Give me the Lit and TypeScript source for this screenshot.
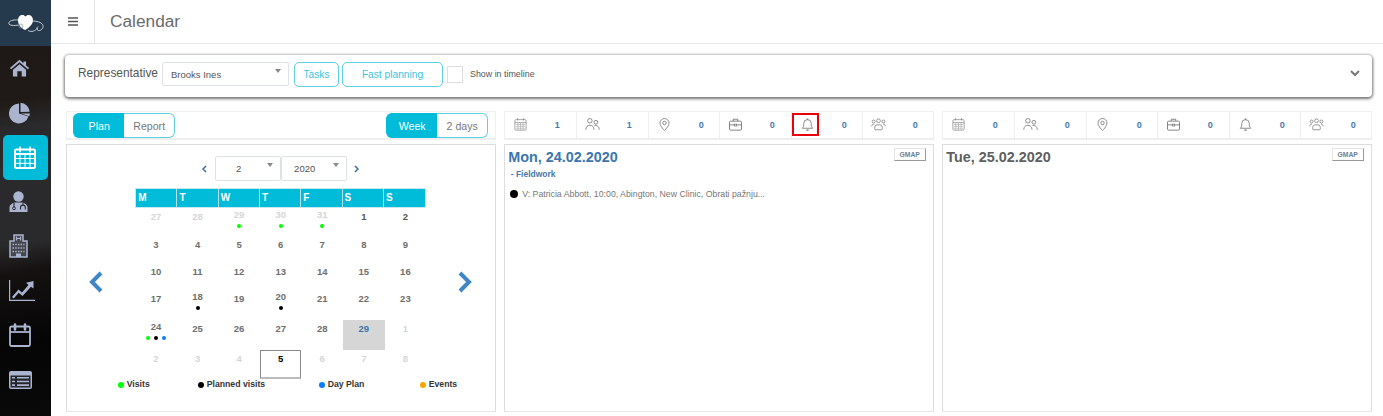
import { LitElement, html, css, svg } from "lit";
import { customElement } from "lit/decorators.js";

const ICON = "#aab4cf";
const DARK = "#2b2c33";
const navIcons = [
  { box: "0 1 24 22", t: svg`<path fill="${ICON}" d="M12 2 1 12l1.500 1.600L12 5l9.500 8.600L23 12l-3.500-3.200V4h-3v2.100z"/><path fill="${ICON}" d="M4.500 14.200 12 7.400l7.500 6.800V22.500h-5V16h-5v6.500h-5z"/>` },
  { box: "0 0 22 22", t: svg`<path fill="${ICON}" d="M10 1.500a10 10 0 1 0 9.500 13L10 11.500z"/><path fill="${ICON}" d="M11.500 .8V10l9.200-.2A10 10 0 0 0 11.500 .8zM11.800 11.500l9.100.1a10 10 0 0 1-.6 2.600z"/>` },
  { box: "0 0 22 23", t: svg`<rect x="1" y="3.500" width="20" height="18.500" rx="1.500" fill="none" stroke="#fff" stroke-width="2"/><path stroke="#fff" stroke-width="2" stroke-linecap="round" d="M6 1.500v4M16 1.500v4"/><path stroke="#fff" stroke-width="2" d="M1 8h20"/><path stroke="#fff" stroke-width="1" d="M1 12.500h20M1 17.300h20M6 8v14M11 8v14M16 8v14"/>` },
  { box: "0 0 19 21", t: svg`<circle cx="9.500" cy="5.500" r="5.200" fill="${ICON}"/><path fill="${ICON}" d="M.5 21v-4.500c0-2.500 2.500-4.500 5-5h8c2.500.5 5 2.500 5 5V21z"/><path fill="none" stroke="${DARK}" stroke-width="1.100" d="M5 11.500V16M14 11.500V14"/><circle cx="5" cy="17.300" r="1.400" fill="none" stroke="${DARK}" stroke-width="1"/><path fill="none" stroke="${DARK}" stroke-width="1.100" d="M11.500 18.500v-2a2.400 2.400 0 0 1 4.800 0v2"/>` },
  { box: "0 0 19 24", t: svg`<path fill="#45464e" stroke="${ICON}" stroke-width="1.500" d="M5 1h9v6h4v16H1V7h4z"/><path stroke="${ICON}" stroke-width="1.200" d="M7.500 2.500v4M11.500 2.500v4M7.500 4.500h4"/><path stroke="${ICON}" stroke-width="1.500" stroke-dasharray="1.500 1.200" d="M3.500 10.500h12M3.500 14h12M3.500 17.500h12"/><path fill="${ICON}" d="M7 19.500h5V23H7z"/>` },
  { box: "0 0 26 21", t: svg`<path fill="none" stroke="${ICON}" stroke-width="1.200" d="M.6 0v20.300H26"/><path fill="${ICON}" d="m3 17 6.500-7.500 3.500 3L19.500 5l-2.500-2.300L24.500 1v7.500L22 6.800 13.500 16 9.700 12.700 4.700 18.500z"/>` },
  { box: "0 0 22 24", t: svg`<rect x="1" y="3.500" width="20" height="19.500" rx="1.500" fill="none" stroke="${ICON}" stroke-width="1.800"/><path stroke="${ICON}" stroke-width="2.600" stroke-linecap="round" d="M6 1.500v5M16 1.500v5"/><path stroke="${ICON}" stroke-width="1.800" d="M1 9h20"/>` },
  { box: "0 0 23 18", t: svg`<rect width="23" height="18" rx="2" fill="${ICON}"/><rect x="1.500" y="4.500" width="20" height="12" fill="#24252c"/><path fill="${ICON}" d="M3 6h3v1.600H3zm5 0h12v1.600H8zM3 9.700h3v1.600H3zm5 0h12v1.600H8zM3 13.300h3v1.600H3zm5 0h12v1.600H8z"/>` },
];
const statIcons = [
  svg`<rect x="2.500" y="3.500" width="15" height="14" rx="1.500" fill="none" stroke="#8a8a8a"/><path stroke="#8a8a8a" d="M2.500 7.500h15M6 1.500v3M14 1.500v3"/><path stroke="#a8a8a8" stroke-width=".8" d="M4 10h12M4 12.500h12M4 15h12M6.500 8v9M10 8v9M13.500 8v9"/>`,
  svg`<circle cx="6.500" cy="5" r="3" fill="none" stroke="#777" stroke-width="1.100"/><circle cx="14.500" cy="7" r="2.500" fill="none" stroke="#777" stroke-width="1.100"/><path fill="none" stroke="#777" stroke-width="1.100" d="M1 17c0-4 2.500-6 5.500-6s5.500 2 5.500 6M12.500 11.500c3-1 6.500.800 6.500 5.500"/>`,
  svg`<path fill="none" stroke="#777" stroke-width="1.100" d="M10 18s-6-5.500-6-10a6 6 0 0 1 12 0c0 4.500-6 10-6 10z"/><circle cx="10" cy="8" r="2.300" fill="none" stroke="#777" stroke-width="1.100"/>`,
  svg`<rect x="2" y="5.500" width="16" height="12" rx="1.500" fill="none" stroke="#777" stroke-width="1.200"/><path fill="none" stroke="#777" stroke-width="1.200" d="M7 5.500V3h6v2.500M2 10.500h16"/><rect x="8.500" y="9.500" width="3" height="2.500" fill="#fff" stroke="#777"/>`,
  svg`<path fill="none" stroke="#777" stroke-width="1.100" d="M3 15h14c-1.500-1.500-2-3-2-6.500a5 5 0 0 0-10 0C5 12 4.500 13.500 3 15z"/><path stroke="#777" stroke-width="1.800" d="M8.500 17.500h3M10 2v1.500"/>`,
  svg`<circle cx="10" cy="5" r="2.500" fill="none" stroke="#777"/><circle cx="3.500" cy="6" r="2" fill="none" stroke="#777"/><circle cx="16.500" cy="6" r="2" fill="none" stroke="#777"/><path fill="none" stroke="#777" d="M5 16v-2.500A3 3 0 0 1 8 10.500h4a3 3 0 0 1 3 3V16a1 1 0 0 1-1 1H6a1 1 0 0 1-1-1zM1 12.500c0-2 1.200-3 3-3M19 12.500c0-2-1.200-3-3-3"/>`,
];

type Cell = { n: number; cls?: string; dots?: string[] };
const G = "#00ff00", K = "#000", B = "#0a7cff", O = "#ffa500";
const rows: Cell[][] = [
  [{ n: 27, cls: "off" }, { n: 28, cls: "off" }, { n: 29, cls: "off", dots: [G] }, { n: 30, cls: "off", dots: [G] }, { n: 31, cls: "off", dots: [G] }, { n: 1, cls: "dk" }, { n: 2, cls: "dk" }],
  [3, 4, 5, 6, 7, 8, 9].map((n) => ({ n })),
  [10, 11, 12, 13, 14, 15, 16].map((n) => ({ n })),
  [{ n: 17 }, { n: 18, dots: [K] }, { n: 19 }, { n: 20, dots: [K] }, { n: 21 }, { n: 22 }, { n: 23 }],
  [{ n: 24, dots: [G, K, B] }, { n: 25 }, { n: 26 }, { n: 27 }, { n: 28 }, { n: 29, cls: "today" }, { n: 1, cls: "off" }],
  [{ n: 2, cls: "off" }, { n: 3, cls: "off" }, { n: 4, cls: "off" }, { n: 5, cls: "sel" }, { n: 6, cls: "off" }, { n: 7, cls: "off" }, { n: 8, cls: "off" }],
];

@customElement("app-root")
export class AppRoot extends LitElement {
  static styles = css`
    :host { display: block; width: 1383px; height: 416px; overflow: hidden; background: #fff; font-family: "Liberation Sans", Arial, sans-serif; color: #666; }
    * { box-sizing: border-box; }
    .app { display: flex; height: 416px; }
    .side { width: 51px; flex: none; display: flex; flex-direction: column; background: linear-gradient(172deg, #1d1815 0, #1f1a17 24%, #2a2a2c 31%, #2a2a2c 58%, #151111 65%, #050505 82%, #090909 100%); }
    .logo { height: 46px; background: #263a4d; display: flex; align-items: center; justify-content: center; }
    .nav { display: flex; flex-direction: column; }
    .nav a { height: 44.500px; padding-left: 9px; display: flex; align-items: center; }
    .nav a.active { background: #00bcd8; margin: 0 3px; height: 45px; padding-left: 11px; border-radius: 5px; margin-bottom: -.5px; }
    .nav svg { display: block; flex: none; }
    .i0 { width: 21px; height: 18px; }
    .i1 { width: 22px; height: 22px; }
    .i2 { width: 22px; height: 23px; }
    .i3 { width: 19px; height: 21px; }
    .i4 { width: 19px; height: 24px; }
    .i5 { width: 26px; height: 21px; }
    .i6 { width: 22px; height: 24px; }
    .i7 { width: 23px; height: 18px; }
    .main { flex: 1; min-width: 0; display: flex; flex-direction: column; }
    .top { height: 44px; flex: none; display: flex; align-items: center; border-bottom: 1px solid #e6e6e6; }
    .burger { width: 44px; height: 43px; border-right: 1px solid #e6e6e6; display: flex; align-items: center; justify-content: center; }
    .burger svg { width: 10px; height: 9px; }
    .title { margin-left: 15px; font-size: 17.300px; color: #6b6b6b; }
    .filter { margin: 11px 11px 0 14px; height: 42px; padding: 0 12px 4px 13px; display: flex; align-items: center; background: #fff; border-radius: 4px; box-shadow: 0 1px 3px 1px rgba(0,0,0,.55); }
    .filter .lab { font-size: 11.900px; color: #555; margin-right: 4px; margin-top: -2px; }
    .sel { position: relative; background: #fff; border: 1px solid #dde2e8; border-radius: 2px; display: flex; align-items: center; color: #555; }
    .sel::after { content: ""; position: absolute; right: 7px; top: 6px; border-left: 3px solid transparent; border-right: 3px solid transparent; border-top: 4px solid #888; }
    .rep { width: 127px; height: 24px; padding-left: 8px; font-size: 9.500px; }
    .btn { height: 25px; border: 1px solid #5fd0e2; border-radius: 5px; color: #3cc4dc; font-size: 10.200px; display: flex; align-items: center; justify-content: center; }
    .tasks { width: 45px; margin-left: 5px; }
    .fast { width: 101px; margin-left: 3px; }
    .check { width: 16px; height: 17px; border: 1px solid #ddd; margin-left: 4px; }
    .show { font-size: 8.900px; margin-left: 7px; color: #555; }
    .chev { margin-left: auto; width: 10px; height: 7px; margin-top: -1px; }
    .cols { margin: 14px 11px 0 14.700px; display: grid; grid-template-columns: 430px 430px 430px; column-gap: 8px; }
    .col { display: flex; flex-direction: column; gap: 4px; }
    .bar { height: 29px; border: 1px solid #f0f0f0; border-bottom: 2px solid #eee; display: flex; align-items: center; justify-content: space-between; padding: 1px 6.500px 0; }
    .seg { display: flex; font-size: 10.600px; }
    .seg span { height: 25px; display: flex; align-items: center; justify-content: center; border: 1px solid #5fd0e2; color: #777; width: 51px; }
    .seg span:first-child { border-radius: 6px 0 0 6px; border-right: 0; }
    .seg span:last-child { border-radius: 0 6px 6px 0; border-left: 0; }
    .seg span.on { background: #00bcd8; color: #fff; border-color: #00bcd8; }
    .stats { height: 29px; border: 1px solid #f0f0f0; border-bottom: 2px solid #eee; display: grid; grid-template-columns: 72px 72px 71px 72px 71px 71px; }
    .stat { position: relative; display: flex; align-items: center; padding-left: 8px; border-right: 1px solid #eee; }
    .stat:last-child { border-right: 0; }
    .stat svg { width: 15px; height: 15px; flex: none; margin-top: -1px; }
    .stat b { font-size: 9px; color: #4a78a8; position: absolute; left: 50px; }
    .stat.mark .box { position: absolute; left: 0; top: 1px; width: 27px; height: 23px; border: 2px solid #e8000b; }
    .panel { height: 268px; border: 1px solid #ddd; border-bottom-color: #e6e6e6; position: relative; }
    .day { padding: 4px 3.500px 0; }
    .day h2 { margin: 0; font-size: 14.400px; line-height: 17px; font-weight: 700; color: #606060; }
    .day.cur h2 { color: #3a76ad; }
    .gmap { position: absolute; right: 7px; top: 3px; width: 32px; height: 13px; font-size: 6.800px; font-weight: 700; color: #6f8090; display: flex; align-items: center; justify-content: center; border: 1px solid #e6e6e6; border-right: 1px solid #999; border-bottom: 1px solid #999; }
    .work { font-size: 8.500px; font-weight: 700; color: #4a78a8; margin: 2px 0 0 2.500px; line-height: 12px; }
    .visit { display: flex; align-items: center; gap: 4px; margin: 8px 0 0 2px; font-size: 8.750px; color: #777; line-height: 12px; }
    .visit i { width: 8px; height: 8px; background: #000; border-radius: 50%; }
    .cal { padding-top: 11px; display: flex; flex-direction: column; align-items: center; }
    .pick { display: flex; align-items: center; height: 25px; }
    .pick .sel { width: 66px; height: 25px; justify-content: center; font-size: 9.500px; padding-right: 19px; }
    .pick svg { width: 6px; height: 8px; }
    .pick svg.l { margin-right: 8px; }
    .pick svg.r { margin-left: 7px; }
    .body { position: relative; width: 100%; display: flex; justify-content: center; margin-top: 7px; }
    .arrow { position: absolute; top: 82px; width: 16px; height: 24px; }
    .arrow.l { left: 21px; }
    .arrow.r { right: 22px; }
    .grid { width: 291px; }
    .head { display: grid; grid-template-columns: repeat(7, 1fr); height: 20px; background: #00bcd8; border: 1px solid #c5e9ef; }
    .head span { color: #fff; font-weight: 700; font-size: 10px; line-height: 18px; padding-left: 2px; border-right: 1px solid #b9dfe6; }
    .head span:last-child { border-right: 0; }
    .days { display: grid; grid-template-columns: repeat(7, 1fr); grid-template-rows: 28px 27px 27px 30px 30px 29px; }
    .d { display: flex; flex-direction: column; align-items: center; padding-top: 3px; font-size: 9.500px; font-weight: 700; line-height: 12px; color: #6e6e6e; }
    .d.has { padding-top: 1px; }
    .d.off { color: #d6d6d6; }
    .d.dk { color: #555; }
    .d.today { background: #d6d6d6; color: #3a76ad; }
    .d.sel { position: static; border: 1px solid #888; border-bottom: 2px solid #bbb; color: #000; border-radius: 0; display: flex; flex-direction: column; padding-top: 2px; }
    .d.sel::after { display: none; }
    .dots { display: flex; gap: 4px; margin-top: 3px; }
    .dots i { width: 4px; height: 4px; border-radius: 50%; }
    .legend { width: 100%; display: flex; font-size: 8.700px; font-weight: 700; color: #333; height: 14px; margin-top: -2px; padding-left: 51px; }
    .legend span { display: flex; align-items: center; gap: 3px; }
    .legend i { width: 6px; height: 6px; border-radius: 50%; margin-top: 2px; }
    .legend .a { width: 80px; }
    .legend .b { width: 121px; }
    .legend .c { width: 101px; }
  `;

  private stats(vals: number[], mark: boolean) {
    return html`<div class="stats">
      ${vals.map((v, i) => html`<div class="stat ${mark && i === 4 ? "mark" : ""}">
        <svg viewBox="0 0 20 20">${statIcons[i]}</svg><b>${v}</b>
        ${mark && i === 4 ? html`<span class="box"></span>` : ""}
      </div>`)}
    </div>`;
  }

  render() {
    return html`<div class="app">
      <aside class="side">
        <div class="logo">
          <svg width="36" height="20" viewBox="0 0 36 20">
            <path fill="#fff" d="M17 17c-4-2-7-5.500-7-9.500C10 4 12 2 14.500 2c1.300 0 2.300.6 3 1.500.8-.9 1.800-1.500 3-1.500C23 2 25 4.200 25 7.500 25 11 21 15 17 17z"/>
            <path fill="none" stroke="#e8edf2" stroke-width=".8" d="M10.500 7C5 6.500.5 8 .8 10.500c.3 2 5.500 2.500 10 1.500M24 8c4 0 10 1 11 4.500.6 2.500-2 5.500-4.500 5-2-.5-2-3-.5-4M29.500 15c-2 3-6 4.500-9.500 2.500"/>
            <circle cx="13" cy="13" r="2" fill="none" stroke="#8d9aa8" stroke-width=".7"/>
          </svg>
        </div>
        <nav class="nav">
          ${navIcons.map((ic, i) => html`<a class="${i === 2 ? "active" : ""}"><svg class="i${i}" viewBox="${ic.box}" preserveAspectRatio="none">${ic.t}</svg></a>`)}
        </nav>
      </aside>
      <main class="main">
        <header class="top">
          <div class="burger"><svg viewBox="0 0 10 9"><path stroke="#555" stroke-width="1.300" d="M0 1h10M0 4.500h10M0 8h10"/></svg></div>
          <div class="title">Calendar</div>
        </header>
        <section class="filter">
          <span class="lab">Representative</span>
          <div class="sel rep">Brooks Ines</div>
          <div class="btn tasks">Tasks</div>
          <div class="btn fast">Fast planning</div>
          <div class="check"></div>
          <span class="show">Show in timeline</span>
          <svg class="chev" viewBox="0 0 10 7"><path fill="none" stroke="#777" stroke-width="2" d="m1 1 4 4 4-4"/></svg>
        </section>
        <section class="cols">
          <div class="col">
            <div class="bar">
              <div class="seg"><span class="on">Plan</span><span>Report</span></div>
              <div class="seg"><span class="on">Week</span><span>2 days</span></div>
            </div>
            <div class="panel cal">
              <div class="pick">
                <svg class="l" viewBox="0 0 6 8"><path fill="none" stroke="#3f6fa5" stroke-width="1.500" d="M5 1 2 4l3 3"/></svg>
                <div class="sel">2</div><div class="sel">2020</div>
                <svg class="r" viewBox="0 0 6 8"><path fill="none" stroke="#3f6fa5" stroke-width="1.500" d="m1 1 3 3-3 3"/></svg>
              </div>
              <div class="body">
                <svg class="arrow l" viewBox="0 0 16 24"><path fill="none" stroke="#3f86c6" stroke-width="4" d="M13 3 4 12l9 9"/></svg>
                <div class="grid">
                  <div class="head">${["M", "T", "W", "T", "F", "S", "S"].map((h) => html`<span>${h}</span>`)}</div>
                  <div class="days">
                    ${rows.flat().map((c) => html`<div class="d ${c.cls ?? ""} ${c.dots ? "has" : ""}">${c.n}
                      ${c.dots ? html`<div class="dots">${c.dots.map((col) => html`<i style="background:${col}"></i>`)}</div>` : ""}
                    </div>`)}
                  </div>
                </div>
                <svg class="arrow r" viewBox="0 0 16 24"><path fill="none" stroke="#3f86c6" stroke-width="4" d="m3 3 9 9-9 9"/></svg>
              </div>
              <div class="legend">
                <span class="a"><i style="background:${G}"></i>Visits</span>
                <span class="b"><i style="background:${K}"></i>Planned visits</span>
                <span class="c"><i style="background:${B}"></i>Day Plan</span>
                <span><i style="background:${O}"></i>Events</span>
              </div>
            </div>
          </div>
          <div class="col">
            ${this.stats([1, 1, 0, 0, 0, 0], true)}
            <div class="panel day cur">
              <h2>Mon, 24.02.2020</h2>
              <div class="gmap">GMAP</div>
              <div class="work">- Fieldwork</div>
              <div class="visit"><i></i>V: Patricia Abbott, 10:00, Abington, New Clinic, Obrati pažnju...</div>
            </div>
          </div>
          <div class="col">
            ${this.stats([0, 0, 0, 0, 0, 0], false)}
            <div class="panel day">
              <h2>Tue, 25.02.2020</h2>
              <div class="gmap">GMAP</div>
            </div>
          </div>
        </section>
      </main>
    </div>`;
  }
}
